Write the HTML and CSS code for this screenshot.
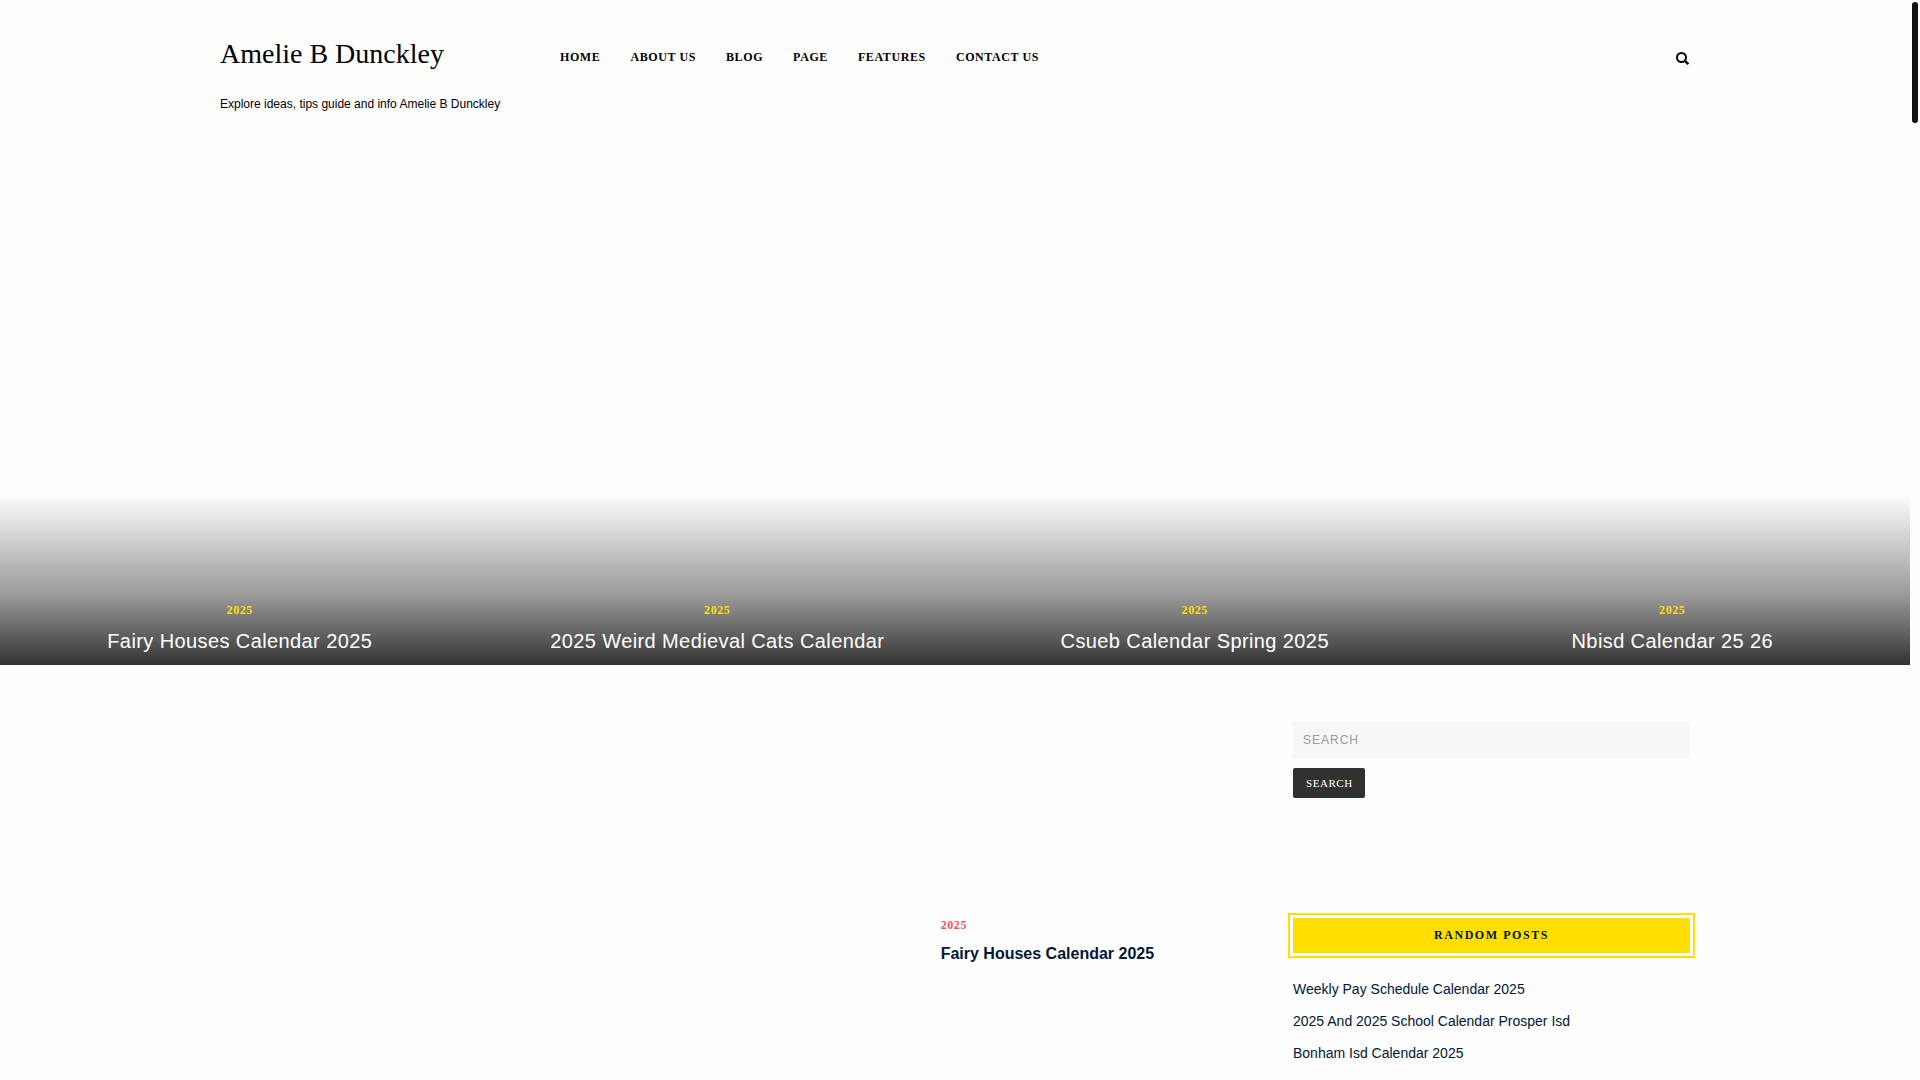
FILE: index.html
```
<!DOCTYPE html>
<html lang="en">
<head>
    <meta charset="UTF-8">
    <meta name="viewport" content="width=device-width, initial-scale=1.0">
    <title>Amelie B Dunckley</title>
    <link rel="stylesheet" href="styles.css">
</head>
<body>
    <div class="hero">
        <header class="container header">
            <div class="brand">
                <a class="logo" href="#">Amelie B Dunckley</a>
                <p class="tagline">Explore ideas, tips guide and info Amelie B Dunckley</p>
            </div>
            <nav class="menu">
                <a href="#">Home</a>
                <a href="#">About Us</a>
                <a href="#">Blog</a>
                <a href="#">Page</a>
                <a href="#">Features</a>
                <a href="#">Contact Us</a>
            </nav>
            <button class="search-toggle" type="button" aria-label="Open search">
                <svg width="14" height="14" viewBox="0 0 14 14" fill="none" stroke="#000">
                    <circle cx="5.5" cy="5.5" r="4.5" stroke-width="2"/>
                    <path d="M8.8 8.8L12.4 12.2" stroke-width="2.4"/>
                </svg>
            </button>
        </header>
        <section class="slides">
            <article class="slide">
                <a class="category" href="#">2025</a>
                <h2><a href="#">Fairy Houses Calendar 2025</a></h2>
            </article>
            <article class="slide">
                <a class="category" href="#">2025</a>
                <h2><a href="#">2025 Weird Medieval Cats Calendar</a></h2>
            </article>
            <article class="slide">
                <a class="category" href="#">2025</a>
                <h2><a href="#">Csueb Calendar Spring 2025</a></h2>
            </article>
            <article class="slide">
                <a class="category" href="#">2025</a>
                <h2><a href="#">Nbisd Calendar 25 26</a></h2>
            </article>
        </section>
    </div>

    <div class="container content">
        <main>
            <article class="post">
                <div class="post-thumb"></div>
                <div class="post-text">
                    <a class="category" href="#">2025</a>
                    <h2><a href="#">Fairy Houses Calendar 2025</a></h2>
                </div>
            </article>
        </main>
        <aside>
            <form class="search-form">
                <input type="search" placeholder="SEARCH" aria-label="Search">
                <button type="submit">SEARCH</button>
            </form>
            <section class="widget">
                <h3>Random Posts</h3>
                <ul>
                    <li><a href="#">Weekly Pay Schedule Calendar 2025</a></li>
                    <li><a href="#">2025 And 2025 School Calendar Prosper Isd</a></li>
                    <li><a href="#">Bonham Isd Calendar 2025</a></li>
                </ul>
            </section>
        </aside>
    </div>
    <div class="scroll-thumb"></div>
</body>
</html>
```

FILE: styles.css
```
* {
    box-sizing: border-box;
}
body {
    margin: 0;
    padding-right: 10px;
    background: #fefefe;
    color: #001737;
    font-family: "Liberation Sans", Arial, sans-serif;
    font-size: 14px;
}
a {
    color: inherit;
    text-decoration: none;
}
h2, h3, p, ul {
    margin: 0;
    padding: 0;
}
.container {
    width: 100%;
    max-width: 1500px;
    margin: 0 auto;
    padding: 0 15px;
}

/* header */
.hero {
    display: flex;
    flex-direction: column;
    min-height: 665px;
}
.header {
    display: flex;
    align-items: flex-start;
    padding-top: 36px;
    color: #000;
}
.brand {
    width: 340px;
}
.logo {
    display: block;
    font-family: "Liberation Serif", "Times New Roman", serif;
    font-size: 28px;
    line-height: 36px;
}
.tagline {
    margin-top: 20px;
    font-size: 12px;
    line-height: 24px;
}
.menu {
    display: flex;
    gap: 30px;
    padding-top: 11px;
    font-family: "Liberation Serif", "Times New Roman", serif;
    font-size: 12px;
    font-weight: 700;
    line-height: 20px;
    letter-spacing: 0.05em;
    text-transform: uppercase;
}
.search-toggle {
    margin-left: auto;
    padding: 16px 0 0;
    border: none;
    background: none;
    line-height: 0;
    cursor: pointer;
}

/* slides */
.slides {
    display: grid;
    grid-template-columns: repeat(4, 1fr);
    margin-top: auto;
}
.slide {
    padding: 107px 20px 10px 22px;
    background: linear-gradient(rgba(0, 0, 0, 0), rgba(0, 0, 0, 0.4) 60%, rgba(0, 0, 0, 0.8));
    text-align: center;
}
.slide h2 {
    margin-top: 7px;
    color: #fff;
    font-size: 20px;
    font-weight: 400;
    line-height: 28px;
    letter-spacing: 0.02em;
}
.category {
    display: block;
    color: #ffde00;
    font-family: "Liberation Serif", "Times New Roman", serif;
    font-size: 12px;
    font-weight: 700;
    line-height: 20px;
    letter-spacing: 0.05em;
}

/* content */
.content {
    display: grid;
    grid-template-columns: 1fr 397px;
    gap: 30px;
    padding-top: 57px;
}
.post {
    display: grid;
    grid-template-columns: 15fr 7fr;
    gap: 30px;
}
.post-text {
    padding-top: 193px;
}
.post .category {
    color: #fb4f53;
}
.post h2 {
    margin-top: 9px;
    font-size: 16px;
    line-height: 20px;
}

/* sidebar */
.search-form input {
    display: block;
    width: 100%;
    height: 36px;
    padding: 0 10px;
    border: none;
    border-radius: 0;
    background: #f7f7f7;
    font-family: inherit;
    font-size: 12px;
    letter-spacing: 1px;
}
.search-form input::placeholder {
    color: #999;
}
.search-form button {
    height: 30px;
    margin-top: 10px;
    padding: 0 12px 0 13px;
    border: none;
    border-radius: 2px;
    background: #313131;
    color: #fff;
    font-family: "Liberation Serif", "Times New Roman", serif;
    font-size: 11px;
    letter-spacing: 0.05em;
    cursor: pointer;
}
.widget {
    margin-top: 120px;
}
.widget h3 {
    outline: 2px solid #ffde00;
    outline-offset: 3px;
    background: #ffde00;
    font-family: "Liberation Serif", "Times New Roman", serif;
    font-size: 12px;
    line-height: 35px;
    letter-spacing: 0.13em;
    text-align: center;
    text-transform: uppercase;
}
.widget ul {
    margin-top: 20px;
    list-style: none;
}
.widget li {
    line-height: 32px;
}

.scroll-thumb {
    position: fixed;
    top: 2px;
    right: 2px;
    width: 6px;
    height: 121px;
    border-radius: 3px;
    background: #111;
}
```
